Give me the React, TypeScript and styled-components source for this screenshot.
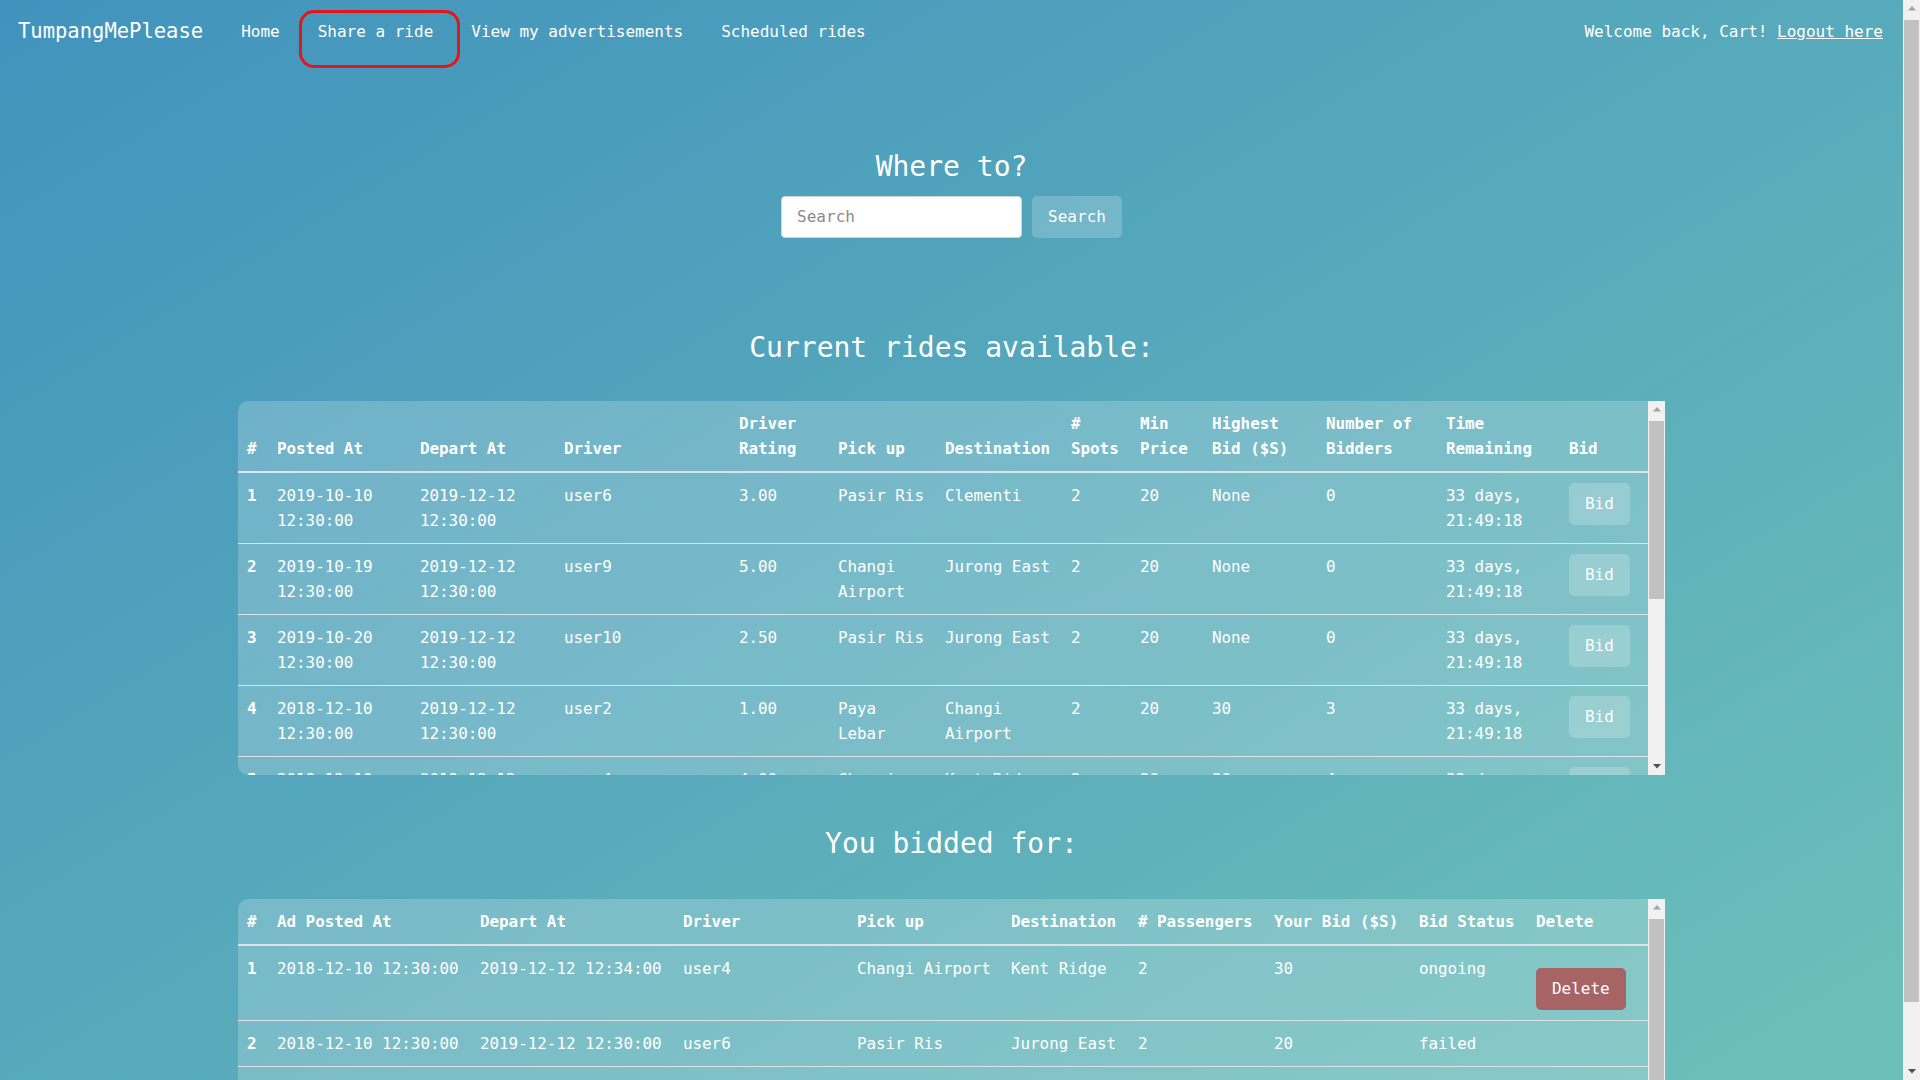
import React from 'react';
import styled, { createGlobalStyle } from 'styled-components';

const GlobalStyle = createGlobalStyle`
  body {
    margin: 0;
    font-family: "DejaVu Sans Mono", "Liberation Mono", monospace;
    color: #fff;
  }
  * { box-sizing: border-box; }
`;

const Page = styled.div`
  display: flex;
  min-height: 1155px;
  background: linear-gradient(to bottom right, #4193bd, #6fc2b9);
`;

const Content = styled.div`
  flex: 1;
  min-width: 0;
  display: flex;
  flex-direction: column;
`;

const NavBar = styled.nav`
  height: 63px;
  display: flex;
  align-items: center;
  padding: 0 20px 0 18px;
  font-size: 16px;
  line-height: 25px;
`;

const Brand = styled.a`
  font-size: 20.5px;
  margin-right: 19px;
  color: #fff;
  text-decoration: none;
`;

const NavLink = styled.a`
  position: relative;
  padding: 0 19px;
  color: #fff;
  text-decoration: none;
`;

const Highlight = styled.span`
  position: absolute;
  left: 0;
  top: -9px;
  width: 161px;
  height: 58px;
  border: 3px solid #e3161e;
  border-radius: 15px;
  pointer-events: none;
`;

const Welcome = styled.div`
  margin-left: auto;
  white-space: pre;
`;

const Logout = styled.a`
  color: #fff;
  text-decoration: underline;
`;

const Main = styled.main`
  display: flex;
  flex-direction: column;
  align-items: center;
  padding-bottom: 17px;
`;

const Heading = styled.h3<{ $top: number }>`
  margin: ${(p) => p.$top}px 0 0;
  font-size: 28px;
  font-weight: normal;
  line-height: 33.6px;
`;

const SearchRow = styled.form`
  margin-top: 12px;
  display: flex;
  gap: 10px;
`;

const SearchInput = styled.input`
  width: 241px;
  height: 42px;
  border: 1px solid #ced4da;
  border-radius: 4px;
  padding: 0 15px;
  font-family: inherit;
  font-size: 16px;
  color: #495057;
  background: #fff;
  &::placeholder { color: #8b8b8b; }
`;

const Button = styled.button<{ $danger?: boolean; $gap?: number }>`
  display: block;
  height: 42px;
  margin-top: ${(p) => p.$gap || 0}px;
  padding: 0 16px;
  border: none;
  border-radius: 5px;
  background: ${(p) => (p.$danger ? '#a66464' : 'rgba(255, 255, 255, 0.2)')};
  color: #fff;
  font-family: inherit;
  font-size: 16px;
  line-height: 42px;
  cursor: pointer;
`;

const TableWrap = styled.div<{ $h: number; $top: number }>`
  margin-top: ${(p) => p.$top}px;
  width: 75%;
  height: ${(p) => p.$h}px;
  display: flex;
  overflow: hidden;
  background: rgba(255, 255, 255, 0.2);
  border-radius: 10px 0 0 10px;
`;

const TableArea = styled.div`
  flex: 1;
  min-width: 0;
  overflow: hidden;
`;

const Table = styled.table<{ $nowrap?: boolean }>`
  width: 100%;
  border-collapse: collapse;
  table-layout: fixed;
  font-size: 15.9px;
  line-height: 25px;
  white-space: ${(p) => (p.$nowrap ? 'nowrap' : 'normal')};
`;

const Th = styled.th`
  text-align: left;
  vertical-align: bottom;
  font-weight: bold;
  padding: 10px 11px 10px 9px;
  border-bottom: 2px solid #dee2e6;
`;

const Td = styled.td<{ $bold?: boolean }>`
  text-align: left;
  vertical-align: top;
  font-weight: ${(p) => (p.$bold ? 'bold' : 'normal')};
  padding: 10px 11px 10px 9px;
  border-bottom: 1px solid #dee2e6;
`;

// classic scrollbar look (the browser hides the real ones in the screenshot)
const ScrollBar = styled.div<{ $page?: boolean }>`
  width: 17px;
  flex-shrink: 0;
  display: flex;
  flex-direction: column;
  background: #f1f1f1;
  ${(p) => p.$page && 'position: sticky; top: 0; height: 100vh; align-self: flex-start;'}
`;

const ArrowBox = styled.div`
  height: 17px;
  flex-shrink: 0;
  display: flex;
  align-items: center;
  justify-content: center;
`;

const Track = styled.div`
  flex: 1;
  padding: 0 1px;
`;

const Thumb = styled.div<{ $top: number; $h: number }>`
  margin-top: ${(p) => p.$top}px;
  height: ${(p) => p.$h}px;
  background: #c1c1c1;
`;

const Arrow = ({ down }: { down?: boolean }) => (
  <ArrowBox>
    <svg width="8" height="5" viewBox="0 0 8 5">
      {down ? (
        <polygon points="0,0 8,0 4,4.5" fill="#505050" />
      ) : (
        <polygon points="0,4.5 8,4.5 4,0" fill="#a3a3a3" />
      )}
    </svg>
  </ArrowBox>
);

const FakeScroll = ({ top, h, page }: { top: number; h: number; page?: boolean }) => (
  <ScrollBar $page={page}>
    <Arrow />
    <Track>
      <Thumb $top={top} $h={h} />
    </Track>
    <Arrow down />
  </ScrollBar>
);

const rideCols = [30, 143, 144, 175, 99, 107, 126, 69, 72, 114, 120, 123];
const rideHead = ['#', 'Posted At', 'Depart At', 'Driver', 'Driver Rating', 'Pick up', 'Destination', '# Spots', 'Min Price', 'Highest Bid ($S)', 'Number of Bidders', 'Time Remaining', 'Bid'];
const rides = [
  ['2019-10-10 12:30:00', '2019-12-12 12:30:00', 'user6', '3.00', 'Pasir Ris', 'Clementi', '2', '20', 'None', '0'],
  ['2019-10-19 12:30:00', '2019-12-12 12:30:00', 'user9', '5.00', 'Changi Airport', 'Jurong East', '2', '20', 'None', '0'],
  ['2019-10-20 12:30:00', '2019-12-12 12:30:00', 'user10', '2.50', 'Pasir Ris', 'Jurong East', '2', '20', 'None', '0'],
  ['2018-12-10 12:30:00', '2019-12-12 12:30:00', 'user2', '1.00', 'Paya Lebar', 'Changi Airport', '2', '20', '30', '3'],
  ['2018-12-10 12:30:00', '2019-12-12 12:30:00', 'user4', '4.00', 'Changi Airport', 'Kent Ridge', '2', '20', '30', '4'],
  ['2018-12-11 12:30:00', '2019-12-12 12:30:00', 'user7', '4.50', 'Clementi', 'Pasir Ris', '3', '15', 'None', '0'],
  ['2018-12-11 12:30:00', '2019-12-12 12:30:00', 'user8', '3.50', 'Kent Ridge', 'Paya Lebar', '1', '25', '28', '2'],
  ['2018-12-12 12:30:00', '2019-12-12 12:30:00', 'user3', '2.00', 'Jurong East', 'Clementi', '2', '10', 'None', '0'],
];

const bidCols = [30, 203, 203, 174, 154, 127, 136, 145, 117];
const bidHead = ['#', 'Ad Posted At', 'Depart At', 'Driver', 'Pick up', 'Destination', '# Passengers', 'Your Bid ($S)', 'Bid Status', 'Delete'];
const bids = [
  ['2018-12-10 12:30:00', '2019-12-12 12:34:00', 'user4', 'Changi Airport', 'Kent Ridge', '2', '30', 'ongoing', true],
  ['2018-12-10 12:30:00', '2019-12-12 12:30:00', 'user6', 'Pasir Ris', 'Jurong East', '2', '20', 'failed', false],
  ['2018-12-10 12:30:00', '2019-12-12 12:30:00', 'user2', 'Paya Lebar', 'Changi Airport', '2', '30', 'ongoing', true],
];

export default function App() {
  return (
    <Page>
      <GlobalStyle />
      <Content>
        <NavBar>
          <Brand href="#">TumpangMePlease</Brand>
          <NavLink href="#">Home</NavLink>
          <NavLink href="#">
            Share a ride
            <Highlight />
          </NavLink>
          <NavLink href="#">View my advertisements</NavLink>
          <NavLink href="#">Scheduled rides</NavLink>
          <Welcome>
            {'Welcome back, Cart! '}
            <Logout href="#">Logout here</Logout>
          </Welcome>
        </NavBar>

        <Main>
          <Heading $top={87}>Where to?</Heading>
          <SearchRow onSubmit={(e) => e.preventDefault()}>
            <SearchInput placeholder="Search" />
            <Button type="submit">Search</Button>
          </SearchRow>

          <Heading $top={93}>Current rides available:</Heading>
          <TableWrap $h={374} $top={37}>
            <TableArea>
              <Table>
                <colgroup>
                  {rideCols.map((w, i) => (
                    <col key={i} style={{ width: w }} />
                  ))}
                  <col />
                </colgroup>
                <thead>
                  <tr>
                    {rideHead.map((h) => (
                      <Th key={h}>{h}</Th>
                    ))}
                  </tr>
                </thead>
                <tbody>
                  {rides.map((r, i) => (
                    <tr key={i}>
                      <Td $bold>{i + 1}</Td>
                      {r.map((c, j) => (
                        <Td key={j}>{c}</Td>
                      ))}
                      <Td>33 days, 21:49:18</Td>
                      <Td>
                        <Button>Bid</Button>
                      </Td>
                    </tr>
                  ))}
                </tbody>
              </Table>
            </TableArea>
            <FakeScroll top={3} h={178} />
          </TableWrap>

          <Heading $top={52}>You bidded for:</Heading>
          <TableWrap $h={250} $top={38}>
            <TableArea>
              <Table $nowrap>
                <colgroup>
                  {bidCols.map((w, i) => (
                    <col key={i} style={{ width: w }} />
                  ))}
                  <col />
                </colgroup>
                <thead>
                  <tr>
                    {bidHead.map((h) => (
                      <Th key={h}>{h}</Th>
                    ))}
                  </tr>
                </thead>
                <tbody>
                  {bids.map((b, i) => (
                    <tr key={i}>
                      <Td $bold>{i + 1}</Td>
                      {b.slice(0, 8).map((c, j) => (
                        <Td key={j}>{c as string}</Td>
                      ))}
                      <Td>{b[8] && <Button $danger $gap={12}>Delete</Button>}</Td>
                    </tr>
                  ))}
                </tbody>
              </Table>
            </TableArea>
            <FakeScroll top={3} h={180} />
          </TableWrap>
        </Main>
      </Content>
      <FakeScroll page top={3} h={982} />
    </Page>
  );
}
